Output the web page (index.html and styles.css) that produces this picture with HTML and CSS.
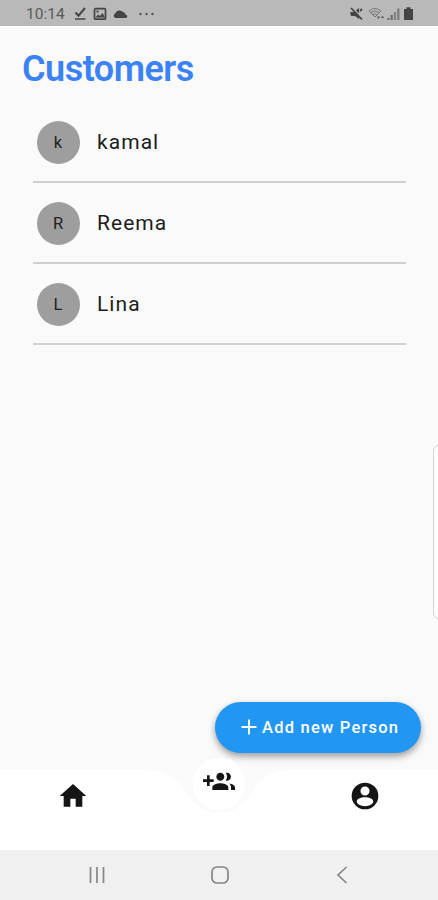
FILE: index.html
```html
<!DOCTYPE html>
<html lang="en">
<head>
<meta charset="utf-8">
<title>Customers</title>
<link rel="stylesheet" href="styles.css">
</head>
<body>
<div class="phone">
  <header class="status">
    <span class="clock">10:14</span>
    <svg class="status-left" width="84" height="14" viewBox="0 0 84 14">
      <path d="M3.500 5.500l3 3.200L13 1" fill="none" stroke="#444" stroke-width="2"/>
      <path d="M3 12h10.500" stroke="#444" stroke-width="1.500"/>
      <rect x="22.500" y="1.700" width="11" height="10.500" rx="1" fill="none" stroke="#444" stroke-width="1.700"/>
      <path d="M23.500 10.500l2.500-3 2 1.500 2.500-3 2.500 4.500zM24.500 3.500h2v2h-2z" fill="#444"/>
      <path d="M43.500 11a2.300 2.300 0 0 1-.5-4.300 4.800 4.800 0 0 1 8-1.700 2.600 2.600 0 0 1 2.500 2.500 1.800 1.800 0 0 1 .5 3.500z" fill="#444"/>
      <g fill="#555"><circle cx="68.500" cy="7" r="1.200"/><circle cx="74.500" cy="7" r="1.200"/><circle cx="80.500" cy="7" r="1.200"/></g>
    </svg>
    <svg class="status-right" width="66" height="14" viewBox="0 0 66 14">
      <path d="M0 5h4l5-4v11L5 9H1z" fill="#444"/>
      <path d="M2 .5l11 11" stroke="#b9b9b9" stroke-width="1.500"/>
      <path d="M1 1l11 11.500M10 4l2-2" stroke="#444" stroke-width="1.800"/>
      <g fill="none" stroke="#777"><path d="M19 4q6-5 12 0l-6 6z"/><path d="M21 5.500q4-3 8 0M23 7.500q2-1.500 4 0"/></g>
      <path d="M27 9.500l1.500 2.500 1.500-2.500zM31 11l1.500-2.500 1.500 2.500z" fill="#555"/>
      <path d="M37.500 11h2v2h-2zM40.700 8h2v5h-2z" fill="#666"/>
      <path d="M43.900 5h2v8h-2zM47.100 1.500h2.400v11.500h-2.400z" fill="#808080"/>
      <path d="M56.500 .3h4V2h2.500v11h-9V2h2.500z" fill="#444"/>
    </svg>
  </header>
  <main class="content">
    <h1>Customers</h1>
    <ul class="list">
      <li><span class="avatar">k</span><span class="name">kamal</span></li>
      <li><span class="avatar">R</span><span class="name">Reema</span></li>
      <li><span class="avatar">L</span><span class="name">Lina</span></li>
    </ul>
    <div class="edge-panel"></div>
    <button class="add">
      <svg width="16" height="16" viewBox="0 0 16 16"><path d="M8 .5v15M.5 8h15" stroke="#fff" stroke-width="1.900"/></svg>
      <span>Add new Person</span>
    </button>
  </main>
  <nav class="tabs">
    <svg class="tabs-shape" width="438" height="92" viewBox="0 0 438 92">
      <path d="M0 12H145C173 12 180 25 189 38C203 60 235 60 249 38C258 25 265 12 293 12H438V92H0z" fill="#fff"/>
      <circle cx="219" cy="26" r="26.500" fill="#fff"/>
    </svg>
    <svg class="tab" viewBox="0 0 24 24"><path d="M10 20v-6h4v6h5v-8h3L12 3 2 12h3v8z"/></svg>
    <svg class="tab active" viewBox="0 0 24 24"><path d="M8 10H5V7H3v3H0v2h3v3h2v-3h3v-2zm10 1c1.660 0 2.990-1.340 2.990-3S19.660 5 18 5c-.32 0-.63.05-.91.14.57.81.9 1.790.9 2.860s-.34 2.040-.9 2.860c.28.09.59.14.91.14zm-5 0c1.660 0 2.990-1.340 2.990-3S14.660 5 13 5c-1.660 0-3 1.340-3 3s1.340 3 3 3zm6.620 2.160c.83.73 1.380 1.660 1.380 2.840v2h3v-2c0-1.540-2.370-2.490-4.380-2.840zM13 13c-2 0-6 1-6 3v2h12v-2c0-2-4-3-6-3z"/></svg>
    <svg class="tab" viewBox="0 0 24 24"><path fill-rule="evenodd" d="M12 2a10 10 0 1 0 0 20a10 10 0 1 0 0-20zM12 4.800a3.400 3.400 0 1 1 0 6.800a3.400 3.400 0 1 1 0-6.800zM12 13c3.400 0 6.200 1.400 6.200 3.200S15.400 19.600 12 19.600s-6.200-1.600-6.200-3.400S8.600 13 12 13z"/></svg>
  </nav>
  <footer class="system">
    <svg width="18" height="18" viewBox="0 0 18 18"><path d="M2.500 1v16M9 1v16M15.500 1v16"/></svg>
    <svg width="18" height="18" viewBox="0 0 18 18"><rect x="1" y="1" width="16" height="16" rx="5"/></svg>
    <svg width="18" height="18" viewBox="0 0 18 18"><path d="M13.500 1L5 9l8.500 8"/></svg>
  </footer>
</div>
</body>
</html>
```
FILE: styles.css
```css
* { box-sizing: border-box; }
body { margin: 0; font-family: Roboto, "Liberation Sans", sans-serif; }
.phone {
  width: 438px;
  height: 900px;
  display: flex;
  flex-direction: column;
  background: #fafafa;
  overflow: hidden;
}
.status {
  height: 26px;
  flex: none;
  display: flex;
  align-items: center;
  padding: 1px 22px 0 26px;
  background: #b9b9b9;
}
.clock { width: 46px; font-size: 15.500px; color: #5a5a5a; }
.status-right { margin-left: auto; }
.content {
  position: relative;
  flex: 1;
  display: flex;
  flex-direction: column;
}
h1 {
  margin: 22px 0 0 22px;
  font-size: 36px;
  line-height: 42px;
  font-weight: 600;
  letter-spacing: -.5px;
  color: #3b82f6;
}
.list { list-style: none; margin: 12px 32px 0 33px; padding: 0; }
.list li {
  height: 81px;
  display: flex;
  align-items: center;
  padding-left: 3.500px;
  border-bottom: 2px solid #d0d0d0;
}
.avatar {
  width: 43px;
  height: 43px;
  margin-top: 1px;
  border-radius: 50%;
  display: flex;
  align-items: center;
  justify-content: center;
  background: #9e9e9e;
  font-size: 16.500px;
  color: #222;
}
.name { margin-left: 17.500px; font-size: 21px; letter-spacing: 1.050px; color: #1c1c1c; }
.edge-panel {
  position: absolute;
  top: 419px;
  right: -8px;
  width: 13px;
  height: 174px;
  border: 1px solid #d4d4d4;
  border-radius: 6px;
  background: #fdfdfd;
}
.add {
  position: absolute;
  left: 215px;
  bottom: 17.500px;
  width: 206px;
  height: 51px;
  display: flex;
  align-items: center;
  padding: 0 0 0 26px;
  gap: 5px;
  border: 0;
  border-radius: 26px;
  background: #2196f3;
  box-shadow: 0 3px 6px rgba(0, 0, 0, .3), 0 5px 10px rgba(0, 0, 0, .1);
  color: #fff;
  font: 500 16.500px Roboto, sans-serif;
  letter-spacing: 1.220px;
  white-space: nowrap;
}
.tabs {
  position: relative;
  height: 80px;
  flex: none;
  display: flex;
  justify-content: space-between;
  padding: 10px 57px 0;
}
.tabs-shape { position: absolute; left: 0; bottom: 0; }
.tab { position: relative; width: 32px; height: 32px; fill: #151515; }
.tab.active { top: -14px; }
.system {
  height: 50px;
  flex: none;
  display: flex;
  justify-content: space-between;
  align-items: center;
  padding: 0 87px 0 88px;
  background: #f0f0f0;
}
.system svg { fill: none; stroke: #858585; stroke-width: 1.700; }
```
